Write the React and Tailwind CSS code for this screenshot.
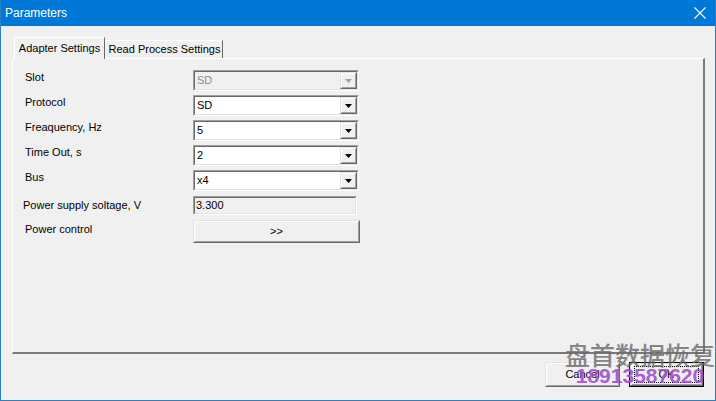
import clsx from "clsx";

function Sunken({ className, children }) {
  return (
    <div className={clsx("border border-[#a0a0a0] border-r-white border-b-white", className)}>
      <div className="flex h-full w-full items-center border border-[#696969] border-r-[#e3e3e3] border-b-[#e3e3e3]">
        {children}
      </div>
    </div>
  );
}

function Raised({ className, children }) {
  return (
    <div className={clsx("border border-[#e3e3e3] border-r-[#696969] border-b-[#696969]", className)}>
      <div className="flex h-full w-full items-center justify-center border border-white border-r-[#a0a0a0] border-b-[#a0a0a0] bg-[#f0f0f0]">
        {children}
      </div>
    </div>
  );
}

function Combo({ value, disabled }) {
  return (
    <Sunken className="h-[21px] w-[166px]">
      <div className={clsx("flex h-full flex-1 items-center pl-[2px]", disabled ? "bg-[#f0f0f0] text-[#8d8d8d]" : "bg-white text-black")}>
        {value}
      </div>
      <Raised className="h-full w-[17px]">
        <svg width="7" height="4" viewBox="0 0 7 4">
          <path d="M0 0h7L3.5 4z" fill={disabled ? "#a0a0a0" : "#000"} />
        </svg>
      </Raised>
    </Sunken>
  );
}

const rows = [
  ["Slot", "SD", true],
  ["Protocol", "SD"],
  ["Freaquency, Hz", "5"],
  ["Time Out, s", "2"],
  ["Bus", "x4"],
];

export default function App() {
  return (
    <div className="relative flex h-[401px] w-[716px] flex-col overflow-hidden border-x border-b border-[#2f7fc4] bg-[#f0f0f0] text-[11px] text-black [font-family:'Liberation_Sans',Arial,sans-serif]">
      <div className="flex h-[26px] shrink-0 items-center justify-between bg-[#0078d7] pl-[4px] pr-[9px] text-[12px] text-white">
        <span>Parameters</span>
        <svg width="12" height="12" viewBox="0 0 12 12" stroke="white" strokeWidth="1.1">
          <path d="M0.5 0.5l11 11M11.5 0.5l-11 11" />
        </svg>
      </div>

      <div className="flex flex-1 flex-col pl-[11px] pr-[11px] pt-[11px]">
        <div className="flex items-end pl-[2px]">
          <div className="relative z-10 -mb-px flex h-[22px] w-[91px] items-center justify-center border-t border-l border-white border-r border-r-[#696969] bg-[#f0f0f0] pb-[1px]">
            Adapter Settings
          </div>
          <div className="flex h-[18px] w-[118px] items-center justify-center border-t border-white border-r border-r-[#696969] bg-[#f0f0f0] pl-[2px]">
            Read Process Settings
          </div>
        </div>

        <div className="h-[296px] w-[693px] border-t border-l border-white border-r-2 border-b-2 border-r-[#7a7a7a] border-b-[#7a7a7a] pl-[12px] pt-[11px]">
          <div className="flex flex-col gap-[4px]">
            {rows.map(([label, value, disabled]) => (
              <div key={label} className="flex h-[21px] items-start">
                <div className="w-[168px] -mt-[1px]">{label}</div>
                <Combo value={value} disabled={disabled} />
              </div>
            ))}
          </div>
          <div className="mt-[5px] flex h-[19px] items-start">
            <div className="-ml-[2px] w-[170px] pt-[1px]">Power supply soltage, V</div>
            <Sunken className="h-[19px] w-[164px]">
              <div className="pl-[1px]">3.300</div>
            </Sunken>
          </div>
          <div className="mt-[5px] flex h-[23px] items-center">
            <div className="w-[168px] -mt-[5px]">Power control</div>
            <Raised className="h-[23px] w-[167px]">&gt;&gt;</Raised>
          </div>
        </div>

        <div className="mt-[8px] flex justify-end gap-[9px]">
          <Raised className="h-[25px] w-[75px]">Cancel</Raised>
          <div className="h-[25px] w-[75px] border border-black">
            <Raised className="h-full w-full">
              <span className="flex h-[17px] w-[65px] items-center justify-center border border-dotted border-black">OK</span>
            </Raised>
          </div>
        </div>
      </div>

      <div className="pointer-events-none absolute left-[564px] top-[342px] flex flex-col items-center leading-none">
        <span className="text-[25px] font-medium text-[#6a6a6a] opacity-80 [font-family:'Noto_Sans_CJK_SC',sans-serif]">盘首数据恢复</span>
        <span className="-mt-[2px] text-[21px] font-bold text-[#a24fd0] opacity-90 [font-family:'Liberation_Sans',sans-serif]">18913587620</span>
      </div>
    </div>
  );
}
